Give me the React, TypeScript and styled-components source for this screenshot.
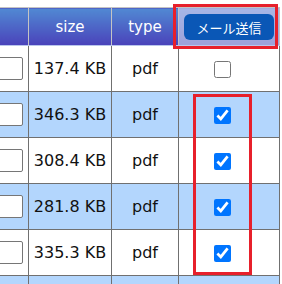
import React from "react";
import styled, {createGlobalStyle} from "styled-components";

interface FileRow {
  size: string;
  type: string;
  checked: boolean;
}

const rows: FileRow[] = [
  {size: "137.4 KB", type: "pdf", checked: false},
  {size: "346.3 KB", type: "pdf", checked: true},
  {size: "308.4 KB", type: "pdf", checked: true},
  {size: "281.8 KB", type: "pdf", checked: true},
  {size: "335.3 KB", type: "pdf", checked: true},
];

const GlobalStyle = createGlobalStyle`
  html, body {
    margin: 0;
    padding: 0;
    background: #fff;
  }
  body {
    font-family: "DejaVu Sans", "Noto Sans CJK JP", sans-serif;
  }
`;

export default function App() {
  return (
    <>
      <GlobalStyle/>
      <Viewport>
        <TableWrap>
          <Table>
            <colgroup>
              <col style={{width: 120}}/>
              <col style={{width: 83}}/>
              <col style={{width: 67}}/>
              <col style={{width: 101}}/>
            </colgroup>
            <thead>
              <tr>
                <HeadCell/>
                <HeadCell>size</HeadCell>
                <HeadCell>type</HeadCell>
                <HeadCell highlight>
                  <SendButton type="button">メール送信</SendButton>
                </HeadCell>
              </tr>
            </thead>
            <tbody>
              {rows.map((row, i) => (
                <Row key={i} striped={i % 2 === 1}>
                  <NameCell>
                    <NameInput/>
                  </NameCell>
                  <Cell>{row.size}</Cell>
                  <Cell>{row.type}</Cell>
                  <Cell>
                    <Check type="checkbox" defaultChecked={row.checked}/>
                  </Cell>
                </Row>
              ))}
              <Row striped>
                <NameCell/>
                <Cell/>
                <Cell/>
                <Cell/>
              </Row>
            </tbody>
          </Table>
          <HeaderMark/>
          <ChecksMark/>
        </TableWrap>
      </Viewport>
    </>
  );
}

const Viewport = styled.div`
  width: 282px;
  height: 284px;
  overflow: hidden;
  padding-top: 7px;
  box-sizing: border-box;
`;

const TableWrap = styled.div`
  position: relative;
  margin-left: -92px;
  width: max-content;
`;

const Table = styled.table`
  border-collapse: collapse;
  table-layout: fixed;
  width: 371px;
`;

const HeadCell = styled.th<{highlight?: boolean}>`
  height: 37px;
  padding: 0;
  border: 1px solid #c4c4c4;
  border-bottom-color: #b9c6ec;
  background: ${({highlight}) => highlight
    ? "linear-gradient(#a6b6e6, #9da1da)"
    : "linear-gradient(#5189d3, #4a42ba)"};
  color: #fff;
  font-size: 15px;
  font-weight: normal;
  text-align: center;
  vertical-align: middle;
`;

const SendButton = styled.button`
  width: 90px;
  height: 26px;
  margin-top: 1px;
  border: none;
  border-radius: 6px;
  background: #0a57b6;
  color: #fff;
  font-family: "Noto Sans CJK JP", sans-serif;
  font-size: 13px;
  padding: 0;
`;

const Row = styled.tr<{striped: boolean}>`
  background: ${({striped}) => striped ? "#b3d6fd" : "#fff"};
`;

const Cell = styled.td`
  height: 45px;
  padding: 0;
  border: 1px solid #707070;
  color: #111;
  font-size: 16px;
  text-align: center;
  vertical-align: middle;
`;

const NameCell = styled(Cell)`
  text-align: right;
  padding-right: 5px;
`;

const NameInput = styled.input`
  width: 100px;
  height: 23px;
  box-sizing: border-box;
  border: 1px solid #767676;
  border-radius: 2px;
  background: #fff;
  vertical-align: middle;
`;

const Check = styled.input`
  width: 17px;
  height: 17px;
  margin: 0 14px 0 0;
  vertical-align: middle;
`;

const Mark = styled.div`
  position: absolute;
  border: 3px solid #e7202b;
  box-sizing: border-box;
  pointer-events: none;
`;

const HeaderMark = styled(Mark)`
  left: 265px;
  top: -3px;
  width: 105px;
  height: 45px;
`;

const ChecksMark = styled(Mark)`
  left: 285px;
  top: 87px;
  width: 59px;
  height: 181px;
`;
